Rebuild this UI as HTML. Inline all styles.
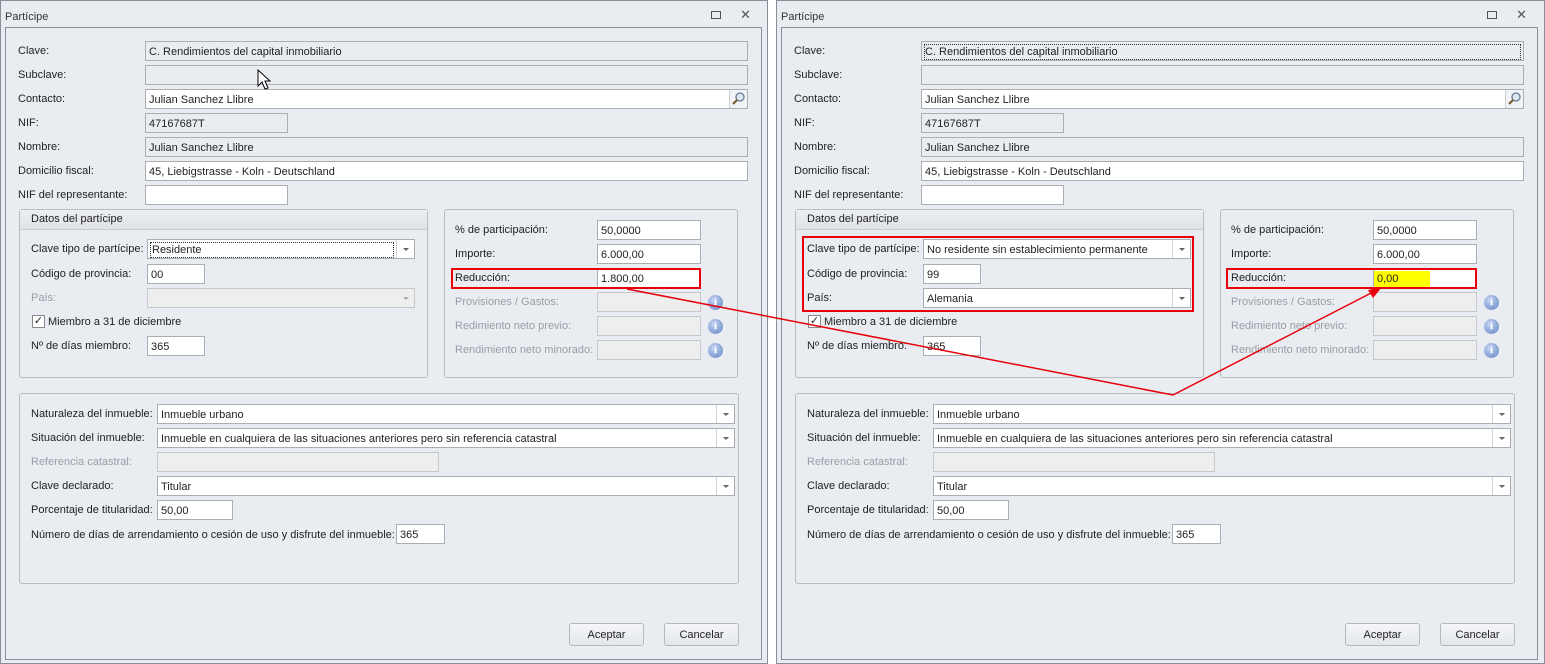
<!DOCTYPE html>
<html><head><meta charset="utf-8"><style>
*{box-sizing:border-box;margin:0;padding:0}
body{width:1545px;height:664px;background:#fff;position:relative;overflow:hidden;font-family:"Liberation Sans",Tahoma,sans-serif;font-size:11px;color:#222}
.win{position:absolute;top:0;width:768px;height:664px;background:#e9ecf1;box-shadow:inset 0 0 0 1px #8a8f97}
.win *{position:absolute}
.t{white-space:nowrap;line-height:14px}
.dis{color:#9a9ea5}
.in{background:#fff;border:1px solid #a9adb4;padding:4px 0 0 3px;white-space:nowrap;line-height:13px}
.ro{background:#e9ecf0;border:1px solid #a9adb4;padding:4px 0 0 3px;white-space:nowrap;line-height:13px}
.gr{background:#eeeeee;border:1px solid #c4c7cc}
.box{border:1px solid #b8bcc3;border-radius:3px}
.arr{width:0;height:0;border-left:3px solid transparent;border-right:3px solid transparent;border-top:3px solid #666}
.sep{width:1px;background:#d0d3d8}
.btn{border:1px solid #b4b8bf;border-radius:3px;background:linear-gradient(#f5f6f8,#e4e7eb);text-align:center;line-height:22px}
.info{width:15px;height:15px;border-radius:50%;background:radial-gradient(circle at 40% 35%,#c8d8f4,#5d7fc4);color:#fff;font-weight:bold;font-size:11px;text-align:center;line-height:15px;font-family:"Liberation Serif",serif}
.red{border:2px solid #e8000b}
</style></head><body>

<!-- LEFT WINDOW -->
<div class="win" style="left:0">
<div class="t" style="left:5px;top:10px;color:#333">Partícipe</div>
<div style="left:711px;top:11px;width:10px;height:8px;border:1px solid #555"></div>
<div class="t" style="left:740px;top:8px;font-size:13px;color:#555">✕</div>
<div style="left:5px;top:27px;width:757px;height:633px;border:1px solid #8a8f97"></div>

<div class="t" style="left:18px;top:44px">Clave:</div><div class="ro" style="left:145px;top:41px;width:603px;height:20px">C. Rendimientos del capital inmobiliario</div>
<div class="t" style="left:18px;top:68px">Subclave:</div><div class="ro" style="left:145px;top:65px;width:603px;height:20px"></div>
<div class="t" style="left:18px;top:92px">Contacto:</div><div class="in" style="left:145px;top:89px;width:603px;height:20px">Julian Sanchez Llibre</div>
<div style="left:729px;top:90px;width:18px;height:18px;background:#f0f2f5;border-left:1px solid #ccc"><svg width="18" height="18"><circle cx="10" cy="7" r="4" fill="#dde8f5" stroke="#6b7c92" stroke-width="1.3"/><line x1="7" y1="10" x2="3" y2="14" stroke="#7b5a2a" stroke-width="2"/></svg></div>
<div class="t" style="left:18px;top:116px">NIF:</div><div class="ro" style="left:145px;top:113px;width:143px;height:20px">47167687T</div>
<div class="t" style="left:18px;top:140px">Nombre:</div><div class="ro" style="left:145px;top:137px;width:603px;height:20px">Julian Sanchez Llibre</div>
<div class="t" style="left:18px;top:164px">Domicilio fiscal:</div><div class="in" style="left:145px;top:161px;width:603px;height:20px">45, Liebigstrasse -  Koln - Deutschland</div>
<div class="t" style="left:18px;top:188px">NIF del representante:</div><div class="in" style="left:145px;top:185px;width:143px;height:20px"></div>

<div class="box" style="left:19px;top:209px;width:409px;height:169px">
 <div style="left:0;top:0;width:407px;height:20px;background:linear-gradient(#eceef1,#dfe2e6);border-bottom:1px solid #c8ccd2"></div>
</div>
<div class="t" style="left:31px;top:212px">Datos del partícipe</div>
<div class="t" style="left:31px;top:242px">Clave tipo de partícipe:</div>
<div class="in" style="left:147px;top:239px;width:268px;height:20px;padding:2px 0 0 2px"><span style="position:static;border:1px dotted #333;padding:1px 1px 0;display:inline-block;width:244px;line-height:13px">Residente</span></div>
<div class="sep" style="left:396px;top:240px;height:18px"></div><div class="arr" style="left:403px;top:248px"></div>
<div class="t" style="left:31px;top:267px">Código de provincia:</div><div class="in" style="left:147px;top:264px;width:58px;height:20px">00</div>
<div class="t dis" style="left:31px;top:291px">País:</div><div class="gr" style="left:147px;top:288px;width:268px;height:20px"></div><div class="arr" style="left:403px;top:297px;border-top-color:#aaa"></div>
<div style="left:32px;top:315px;width:13px;height:13px;border:1px solid #888;background:#fff;font-size:11px;line-height:11px;text-align:center">✓</div>
<div class="t" style="left:48px;top:315px">Miembro a 31 de diciembre</div>
<div class="t" style="left:31px;top:339px">Nº de días miembro:</div><div class="in" style="left:147px;top:336px;width:58px;height:20px">365</div>

<div class="box" style="left:444px;top:209px;width:294px;height:169px"></div>
<div class="t" style="left:455px;top:223px">% de participación:</div><div class="in" style="left:597px;top:220px;width:104px;height:20px">50,0000</div>
<div class="t" style="left:455px;top:247px">Importe:</div><div class="in" style="left:597px;top:244px;width:104px;height:20px">6.000,00</div>
<div class="t" style="left:455px;top:271px">Reducción:</div><div class="in" style="left:597px;top:268px;width:104px;height:20px">1.800,00</div>
<div class="red" style="left:451px;top:268px;width:250px;height:21px"></div>
<div class="t dis" style="left:455px;top:295px">Provisiones / Gastos:</div><div class="gr" style="left:597px;top:292px;width:104px;height:20px"></div><div class="info" style="left:708px;top:295px">i</div>
<div class="t dis" style="left:455px;top:319px">Redimiento neto previo:</div><div class="gr" style="left:597px;top:316px;width:104px;height:20px"></div><div class="info" style="left:708px;top:319px">i</div>
<div class="t dis" style="left:455px;top:343px">Rendimiento neto minorado:</div><div class="gr" style="left:597px;top:340px;width:104px;height:20px"></div><div class="info" style="left:708px;top:343px">i</div>

<div class="box" style="left:19px;top:393px;width:720px;height:191px"></div>
<div class="t" style="left:31px;top:407px">Naturaleza del inmueble:</div><div class="in" style="left:157px;top:404px;width:578px;height:20px">Inmueble urbano</div><div class="sep" style="left:716px;top:405px;height:18px"></div><div class="arr" style="left:723px;top:413px"></div>
<div class="t" style="left:31px;top:431px">Situación del inmueble:</div><div class="in" style="left:157px;top:428px;width:578px;height:20px">Inmueble en cualquiera de las situaciones anteriores pero sin referencia catastral</div><div class="sep" style="left:716px;top:429px;height:18px"></div><div class="arr" style="left:723px;top:437px"></div>
<div class="t dis" style="left:31px;top:455px">Referencia catastral:</div><div class="gr" style="left:157px;top:452px;width:282px;height:20px"></div>
<div class="t" style="left:31px;top:479px">Clave declarado:</div><div class="in" style="left:157px;top:476px;width:578px;height:20px">Titular</div><div class="sep" style="left:716px;top:477px;height:18px"></div><div class="arr" style="left:723px;top:485px"></div>
<div class="t" style="left:31px;top:503px">Porcentaje de titularidad:</div><div class="in" style="left:157px;top:500px;width:76px;height:20px">50,00</div>
<div class="t" style="left:31px;top:528px">Número de días de arrendamiento o cesión de uso y disfrute del inmueble:</div><div class="in" style="left:396px;top:524px;width:49px;height:20px">365</div>

<div class="btn" style="left:569px;top:623px;width:75px;height:23px">Aceptar</div>
<div class="btn" style="left:664px;top:623px;width:75px;height:23px">Cancelar</div>
</div>

<!-- RIGHT WINDOW -->
<div class="win" style="left:776px;width:769px">
<div class="t" style="left:5px;top:10px;color:#333">Partícipe</div>
<div style="left:711px;top:11px;width:10px;height:8px;border:1px solid #555"></div>
<div class="t" style="left:740px;top:8px;font-size:13px;color:#555">✕</div>
<div style="left:5px;top:27px;width:757px;height:633px;border:1px solid #8a8f97"></div>

<div class="t" style="left:18px;top:44px">Clave:</div><div class="ro" style="left:145px;top:41px;width:603px;height:20px;padding:2px 0 0 2px"><span style="position:static;border:1px dotted #333;display:inline-block;width:597px;padding-top:1px;line-height:13px">C. Rendimientos del capital inmobiliario</span></div>
<div class="t" style="left:18px;top:68px">Subclave:</div><div class="ro" style="left:145px;top:65px;width:603px;height:20px"></div>
<div class="t" style="left:18px;top:92px">Contacto:</div><div class="in" style="left:145px;top:89px;width:603px;height:20px">Julian Sanchez Llibre</div>
<div style="left:729px;top:90px;width:18px;height:18px;background:#f0f2f5;border-left:1px solid #ccc"><svg width="18" height="18"><circle cx="10" cy="7" r="4" fill="#dde8f5" stroke="#6b7c92" stroke-width="1.3"/><line x1="7" y1="10" x2="3" y2="14" stroke="#7b5a2a" stroke-width="2"/></svg></div>
<div class="t" style="left:18px;top:116px">NIF:</div><div class="ro" style="left:145px;top:113px;width:143px;height:20px">47167687T</div>
<div class="t" style="left:18px;top:140px">Nombre:</div><div class="ro" style="left:145px;top:137px;width:603px;height:20px">Julian Sanchez Llibre</div>
<div class="t" style="left:18px;top:164px">Domicilio fiscal:</div><div class="in" style="left:145px;top:161px;width:603px;height:20px">45, Liebigstrasse -  Koln - Deutschland</div>
<div class="t" style="left:18px;top:188px">NIF del representante:</div><div class="in" style="left:145px;top:185px;width:143px;height:20px"></div>

<div class="box" style="left:19px;top:209px;width:409px;height:169px">
 <div style="left:0;top:0;width:407px;height:20px;background:linear-gradient(#eceef1,#dfe2e6);border-bottom:1px solid #c8ccd2"></div>
</div>
<div class="t" style="left:31px;top:212px">Datos del partícipe</div>
<div class="t" style="left:31px;top:242px">Clave tipo de partícipe:</div>
<div class="in" style="left:147px;top:239px;width:268px;height:20px">No residente sin establecimiento permanente</div>
<div class="sep" style="left:396px;top:240px;height:18px"></div><div class="arr" style="left:403px;top:248px"></div>
<div class="t" style="left:31px;top:267px">Código de provincia:</div><div class="in" style="left:147px;top:264px;width:58px;height:20px">99</div>
<div class="t" style="left:31px;top:291px">País:</div><div class="in" style="left:147px;top:288px;width:268px;height:20px">Alemania</div><div class="sep" style="left:396px;top:289px;height:18px"></div><div class="arr" style="left:403px;top:297px"></div>
<div class="red" style="left:26px;top:236px;width:392px;height:76px"></div>
<div style="left:32px;top:315px;width:13px;height:13px;border:1px solid #888;background:#fff;font-size:11px;line-height:11px;text-align:center">✓</div>
<div class="t" style="left:48px;top:315px">Miembro a 31 de diciembre</div>
<div class="t" style="left:31px;top:339px">Nº de días miembro:</div><div class="in" style="left:147px;top:336px;width:58px;height:20px">365</div>

<div class="box" style="left:444px;top:209px;width:294px;height:169px"></div>
<div class="t" style="left:455px;top:223px">% de participación:</div><div class="in" style="left:597px;top:220px;width:104px;height:20px">50,0000</div>
<div class="t" style="left:455px;top:247px">Importe:</div><div class="in" style="left:597px;top:244px;width:104px;height:20px">6.000,00</div>
<div class="t" style="left:455px;top:271px">Reducción:</div><div class="in" style="left:597px;top:268px;width:104px;height:20px;padding:2px 0 0 0"><span style="position:static;display:inline-block;background:#ffff00;width:56px;padding:2px 0 1px 3px;line-height:13px">0,00</span></div>
<div class="red" style="left:450px;top:268px;width:251px;height:21px"></div>
<div class="t dis" style="left:455px;top:295px">Provisiones / Gastos:</div><div class="gr" style="left:597px;top:292px;width:104px;height:20px"></div><div class="info" style="left:708px;top:295px">i</div>
<div class="t dis" style="left:455px;top:319px">Redimiento neto previo:</div><div class="gr" style="left:597px;top:316px;width:104px;height:20px"></div><div class="info" style="left:708px;top:319px">i</div>
<div class="t dis" style="left:455px;top:343px">Rendimiento neto minorado:</div><div class="gr" style="left:597px;top:340px;width:104px;height:20px"></div><div class="info" style="left:708px;top:343px">i</div>

<div class="box" style="left:19px;top:393px;width:720px;height:191px"></div>
<div class="t" style="left:31px;top:407px">Naturaleza del inmueble:</div><div class="in" style="left:157px;top:404px;width:578px;height:20px">Inmueble urbano</div><div class="sep" style="left:716px;top:405px;height:18px"></div><div class="arr" style="left:723px;top:413px"></div>
<div class="t" style="left:31px;top:431px">Situación del inmueble:</div><div class="in" style="left:157px;top:428px;width:578px;height:20px">Inmueble en cualquiera de las situaciones anteriores pero sin referencia catastral</div><div class="sep" style="left:716px;top:429px;height:18px"></div><div class="arr" style="left:723px;top:437px"></div>
<div class="t dis" style="left:31px;top:455px">Referencia catastral:</div><div class="gr" style="left:157px;top:452px;width:282px;height:20px"></div>
<div class="t" style="left:31px;top:479px">Clave declarado:</div><div class="in" style="left:157px;top:476px;width:578px;height:20px">Titular</div><div class="sep" style="left:716px;top:477px;height:18px"></div><div class="arr" style="left:723px;top:485px"></div>
<div class="t" style="left:31px;top:503px">Porcentaje de titularidad:</div><div class="in" style="left:157px;top:500px;width:76px;height:20px">50,00</div>
<div class="t" style="left:31px;top:528px">Número de días de arrendamiento o cesión de uso y disfrute del inmueble:</div><div class="in" style="left:396px;top:524px;width:49px;height:20px">365</div>

<div class="btn" style="left:569px;top:623px;width:75px;height:23px">Aceptar</div>
<div class="btn" style="left:664px;top:623px;width:75px;height:23px">Cancelar</div>
</div>

<svg style="position:absolute;left:0;top:0" width="1545" height="664">
<polyline points="627,289 1173,395 1377,290" fill="none" stroke="#e8000b" stroke-width="1.5"/>
<polygon points="1382,287 1368,290 1373,298" fill="#e8000b"/>
<path d="M258,70 L258,86 L262,82 L265,89 L268,88 L265,81 L270,81 Z" fill="#fff" stroke="#000" stroke-width="1"/>
</svg>
</body></html>
